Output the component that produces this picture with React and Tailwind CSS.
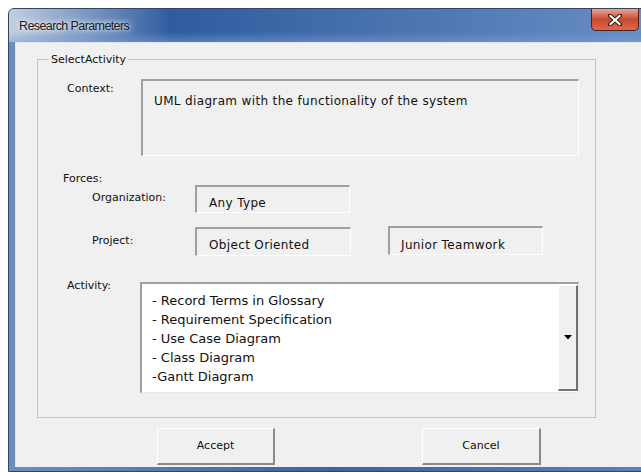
import React from 'react';

const activities = [
  '- Record Terms in Glossary',
  '- Requirement Specification',
  '- Use Case Diagram',
  '- Class Diagram',
  '-Gantt Diagram',
];

// sunken read-only field, classic win32 look
const Field = ({ className = '', children }) => (
  <div
    className={`border-t-2 border-l-2 border-r border-b border-t-[#a0a0a0] border-l-[#a0a0a0] border-r-white border-b-white bg-[#f0f0f0] text-[12px] tracking-[0.35px] text-[#111] ${className}`}
  >
    {children}
  </div>
);

const Button = ({ children, className = '' }) => (
  <button
    className={`h-[37px] border-t border-l border-r-2 border-b-2 border-t-white border-l-white border-r-[#8a8a8a] border-b-[#8a8a8a] bg-[#f0f0f0] text-[11px] text-[#111] ${className}`}
  >
    {children}
  </button>
);

const CloseButton = () => (
  <div className="w-[48px] h-[22px] mr-[18px] rounded-b-[5px] border border-t-0 border-[#5a1d12] bg-gradient-to-b from-[#e9a595] via-[#c9472f] to-[#d86a4f] flex items-center justify-center">
    <svg width="14" height="12" viewBox="0 0 14 12">
      <path d="M2 1.5 L12 10.5 M12 1.5 L2 10.5" stroke="#3a1a14" strokeWidth="4" strokeLinecap="square" />
      <path d="M2.5 2 L11.5 10 M11.5 2 L2.5 10" stroke="#ffffff" strokeWidth="2.2" strokeLinecap="square" />
    </svg>
  </div>
);

export default function App() {
  return (
    <div className="w-[641px] h-[472px] overflow-hidden bg-white pl-2 pt-2 font-['DejaVu_Sans',sans-serif]">
      {/* window frame */}
      <div className="w-[650px] h-[464px] flex flex-col rounded-tl-[6px] border border-[#34465f] bg-gradient-to-r from-[#6d8dbd] via-[#3c64a3] to-[#5b82bb] overflow-hidden">
        {/* title bar */}
        <div className="relative h-[33px] flex items-start bg-gradient-to-r from-[#c3cfdf] via-[#2f5c9f] via-25% to-[#6a8fc3]">
          <div className="absolute inset-x-0 bottom-0 h-[10px] bg-gradient-to-b from-transparent to-[#7aa0d6]/50" />
          <span className="relative mt-[8px] ml-[10px] text-[12.5px] tracking-[-0.6px] text-[#1b1b1b] font-['Liberation_Sans',sans-serif] [text-shadow:0_0_8px_rgba(255,255,255,0.95),0_0_4px_rgba(255,255,255,0.9)]">
            Research Parameters
          </span>
          <div className="flex-1" />
          <div className="relative">
            <CloseButton />
          </div>
        </div>

        {/* client area */}
        <div className="flex-1 pl-[6px] pb-[4px]">
          <div className="h-full bg-[#f0f0f0] border-t border-l border-[#dfe6ef] flex flex-col">
            {/* group box */}
            <div className="ml-[21px] mt-[16px] w-[559px] h-[359px] border border-[#c4c4c4] flex flex-col">
              <span className="-mt-[7px] ml-[11px] px-[2px] w-fit bg-[#f0f0f0] text-[11px] leading-[14px] text-[#111]">
                SelectActivity
              </span>

              {/* context */}
              <div className="mt-[12px] pl-[29px] flex items-start">
                <span className="w-[74px] pt-[3px] text-[11px] leading-[14px] text-[#111]">Context:</span>
                <Field className="w-[438px] h-[77px] pl-[11px] pt-[12px] leading-[16px]">
                  UML diagram with the functionality of the system
                </Field>
              </div>

              {/* forces */}
              <div className="mt-[17px] pl-[25px] h-[12px] text-[11px] leading-[12px] text-[#111]">Forces:</div>

              <div className="pl-[54px] flex items-start">
                <span className="w-[103px] pt-[6px] text-[11px] leading-[14px] text-[#111]">Organization:</span>
                <Field className="w-[155px] h-[28px] pl-[12px] pt-[8px] leading-[16px]">Any Type</Field>
              </div>

              <div className="mt-[14px] pl-[54px] flex items-start">
                <span className="w-[103px] pt-[7px] text-[11px] leading-[14px] text-[#111]">Project:</span>
                <Field className="w-[156px] h-[29px] pl-[12px] pt-[8px] leading-[16px]">Object Oriented</Field>
                <Field className="ml-[37px] -mt-[1px] w-[155px] h-[29px] pl-[11px] pt-[9px] leading-[16px]">
                  Junior Teamwork
                </Field>
              </div>

              {/* activity list */}
              <div className="mt-[22px] pl-[29px] flex items-start">
                <span className="w-[73px] pt-[1px] text-[11px] leading-[14px] text-[#111]">Activity:</span>
                <div className="mt-[4px] w-[439px] h-[111px] flex border-t-2 border-l-2 border-r border-b border-t-[#a0a0a0] border-l-[#a0a0a0] border-r-[#e8e8e8] border-b-[#e8e8e8] bg-white">
                  <ul className="flex-1 pl-[10px] pt-[7px] text-[13px] leading-[19px] text-[#111]">
                    {activities.map((a) => (
                      <li key={a}>{a}</li>
                    ))}
                  </ul>
                  <div className="w-[20px] my-[1px] border-t border-l border-r-2 border-b-2 border-t-white border-l-white border-r-[#707070] border-b-[#707070] bg-[#f0f0f0] flex items-center justify-center">
                    <svg width="8" height="5" viewBox="0 0 8 5">
                      <path d="M0 0 H8 L4 4.5 Z" fill="#000" />
                    </svg>
                  </div>
                </div>
              </div>
            </div>

            {/* dialog buttons */}
            <div className="mt-[10px] ml-[141px] flex">
              <Button className="w-[118px]">Accept</Button>
              <Button className="ml-[147px] w-[119px]">Cancel</Button>
            </div>
          </div>
        </div>
      </div>
    </div>
  );
}
